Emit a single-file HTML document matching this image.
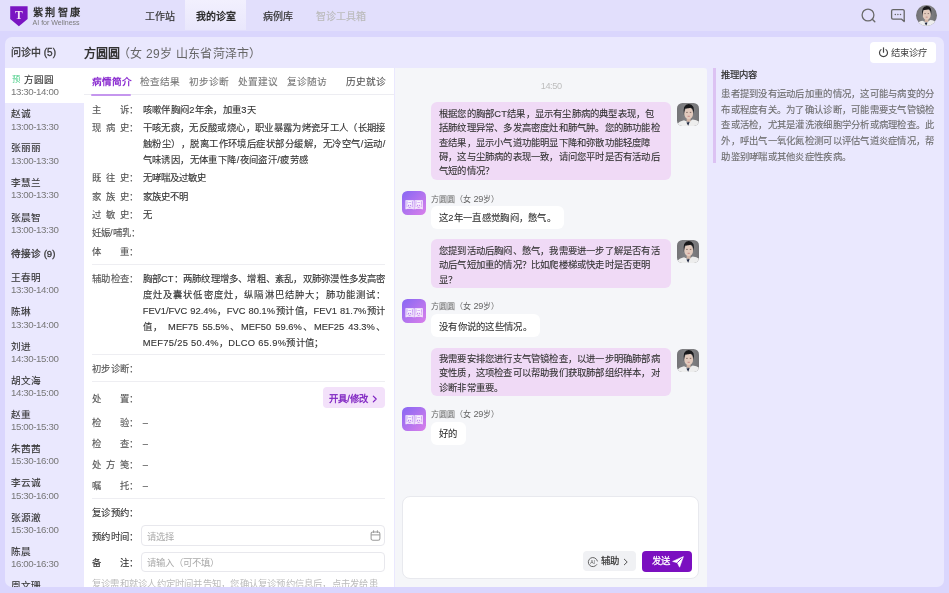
<!DOCTYPE html>
<html lang="zh-CN"><head><meta charset="utf-8">
<style>
*{box-sizing:border-box;margin:0;padding:0}
html,body{width:949px;height:593px;overflow:hidden}
body{text-spacing-trim:space-all;background:#DAD6FD;font-family:"Liberation Sans",sans-serif;color:#333;position:relative}
.a{position:absolute;white-space:nowrap}
#nav{position:absolute;left:0;top:0;width:949px;height:31.3px;background:#E2DFFC}
#act{position:absolute;left:184.7px;top:0;width:61px;height:30.4px;background:linear-gradient(#F2F0FE,#E9E7FC)}
.nv{font-size:10px;line-height:14px;top:9.7px;color:#333;-webkit-text-stroke:0.18px #333}
#panel{position:absolute;left:5px;top:37px;width:938.5px;height:550.3px;background:#EAE8FE;border-radius:7px;overflow:hidden}
#clip{position:absolute;left:0;top:0;width:949px;height:587.3px;overflow:hidden}
#root{position:absolute;left:0;top:0;width:949px;height:593px;will-change:transform;background:#DAD6FD}
.nm{font-size:9.6px;line-height:14px;color:#333;-webkit-text-stroke:0.12px #333}
.tm{font-size:9.7px;line-height:12px;color:#777;letter-spacing:-0.38px}
#detail{position:absolute;left:84px;top:68.2px;width:309.9px;height:530px;background:#fff}
#chat{position:absolute;left:394.5px;top:68.2px;width:312.8px;height:530px;background:#F5F6F9;border-top-right-radius:3px}
.tab{font-size:9.67px;line-height:14px;top:75.1px;color:#777;-webkit-text-stroke:0.1px #777}
.lb{font-size:9.33px;line-height:16px;color:#555;left:92px;white-space:nowrap;-webkit-text-stroke:0.12px #555}
.j{display:inline-block;width:37.33px;text-align:justify;text-align-last:justify;vertical-align:top}
.vl{font-size:9.33px;line-height:16px;color:#333;left:142.7px;width:242.7px;-webkit-text-stroke:0.12px #333}
.jl{text-align:justify;text-align-last:justify}
.sep{position:absolute;left:91.7px;width:293.8px;height:1px;background:#EEEEF2}
.bub{position:absolute;white-space:nowrap;background:#F0DAF6;border-radius:6px;font-size:9.33px;line-height:14.4px;letter-spacing:0.2px;color:#333;padding:4.3px 8px 2.6px 8px;width:240px;-webkit-text-stroke:0.1px #333}
.pb{position:absolute;background:#fff;border-radius:6px;font-size:9.33px;line-height:14.5px;letter-spacing:0.3px;color:#333;padding:5.6px 8px 3px 8px;white-space:nowrap;-webkit-text-stroke:0.1px #333}
.dav{position:absolute;left:677px;width:22.4px;height:23.3px;border-radius:5.5px;overflow:hidden;background:linear-gradient(90deg,#747477,#858588 50%,#747477)}
.pav{position:absolute;left:402.3px;width:23.8px;height:23.7px;border-radius:5.5px;background:linear-gradient(135deg,#8767F4,#DA7FEA);color:rgba(255,255,255,0.85);font-size:9.8px;line-height:23.7px;text-align:center;-webkit-text-stroke:0.3px rgba(255,255,255,0.85);letter-spacing:0px;padding-top:1.6px;text-indent:0px;font-size:9.4px}
.plb{font-size:8px;line-height:12px;color:#666;left:431.3px;margin-top:1.5px}
.inp{position:absolute;left:141px;width:244.4px;border:1px solid #E8E8ED;border-radius:4px;background:#fff}
.ph{font-size:9.33px;line-height:14px;color:#AAA}
</style></head><body><div id="root">
<div id="nav"></div>
<div id="act"></div>
<!-- logo -->
<svg class="a" style="left:10px;top:5.5px" width="18" height="21" viewBox="0 0 18 21">
<path d="M0.2 0.2H17.6V13L8.9 20.2L0.2 13Z" fill="#7A14C2"/>
<text x="8.9" y="12.8" text-anchor="middle" font-family="Liberation Serif" font-size="11.5" font-weight="bold" fill="#F2DDF5">T</text>
</svg>
<div class="a" style="left:33px;top:6px;font-size:10.2px;line-height:13px;letter-spacing:2.3px;font-weight:bold;color:#333">紫荆智康</div>
<div class="a" style="left:32.6px;top:18.6px;font-size:7.1px;line-height:8px;color:#7c7c7c;letter-spacing:-0.04px">AI for Wellness</div>
<div class="a nv" style="left:145px">工作站</div>
<div class="a nv" style="left:196px;font-weight:bold;color:#2a2a2a;-webkit-text-stroke:0px">我的诊室</div>
<div class="a nv" style="left:262.5px">病例库</div>
<div class="a nv" style="left:316px;color:#BBB;-webkit-text-stroke:0.15px #BBB">智诊工具箱</div>
<!-- right icons -->
<svg class="a" style="left:860px;top:7px" width="18" height="18" viewBox="0 0 18 18">
<circle cx="8" cy="8" r="5.9" fill="none" stroke="#6a6a6a" stroke-width="1.3"/>
<path d="M12.3 12.3L14.8 14.8" stroke="#6a6a6a" stroke-width="1.4" stroke-linecap="round"/>
</svg>
<svg class="a" style="left:889px;top:7px" width="18" height="18" viewBox="0 0 18 18">
<path d="M4 2.6H13.8A1.4 1.4 0 0 1 15.2 4V14.6L12.6 12.2H4A1.4 1.4 0 0 1 2.6 10.8V4A1.4 1.4 0 0 1 4 2.6Z" fill="none" stroke="#666" stroke-width="1.3" stroke-linejoin="round"/>
<circle cx="6.3" cy="7.4" r="0.75" fill="#666"/><circle cx="8.9" cy="7.4" r="0.75" fill="#666"/><circle cx="11.5" cy="7.4" r="0.75" fill="#666"/>
</svg>
<div class="a" style="left:916.2px;top:5.2px;width:20.8px;height:20.8px;border-radius:50%;overflow:hidden;background:linear-gradient(90deg,#707073,#88888b 50%,#707073)">
<svg width="21" height="21" viewBox="0 0 23 23"><path d="M0 23 L0.3 21.5 Q1.8 18.2 7 17.2 L11.3 19.2 L15.6 16.4 Q20.6 16.8 22.6 19.5 L23 23Z" fill="#EDEDED"/><path d="M9.4 19.4 L11.2 22.8 L12.6 19.1Z" fill="#1f2740"/><rect x="9.7" y="14.2" width="3.8" height="4.4" fill="#D2B4A4"/><ellipse cx="11.7" cy="10.3" rx="4.4" ry="5.9" fill="#E2CABD"/><path d="M6.9 12.2 Q5.4 1.1 11.8 1.1 Q18.1 1.1 16.7 11.8 Q16.4 5.6 14 4.7 Q11 5.7 8 5.5 Q7.3 8.2 6.9 12.2Z" fill="#18181a"/><path d="M9.2 9.4h1.5M12.8 9.4h1.5" stroke="#6a5650" stroke-width="0.8"/><path d="M10.6 13.3h2.2" stroke="#c07a78" stroke-width="0.8"/></svg>
</div>

<div id="panel"></div>
<div id="clip">
<!-- header -->
<div class="a" style="left:11px;top:46.1px;font-size:10px;line-height:14px;color:#383838;-webkit-text-stroke:0.3px #383838">问诊中 (5)</div>
<div class="a" style="left:84px;top:45.8px;font-size:12px;line-height:16px;color:#333;font-weight:bold">方圆圆</div>
<div class="a" style="left:118px;top:45.8px;font-size:12px;line-height:16px;letter-spacing:0.25px;color:#666">（女 29岁 山东省菏泽市）</div>
<div class="a" style="left:869.8px;top:42.2px;width:66.2px;height:21.1px;background:#fff;border-radius:4px"></div>
<svg class="a" style="left:877.5px;top:46.8px" width="11" height="11" viewBox="0 0 11 11">
<path d="M3 2.6A4 4 0 1 0 8 2.6" fill="none" stroke="#444" stroke-width="1.2" stroke-linecap="round"/>
<path d="M5.5 0.8V5.2" stroke="#444" stroke-width="1.2" stroke-linecap="round"/>
</svg>
<div class="a" style="left:891px;top:45.8px;font-size:9.33px;line-height:14px;color:#444">结束诊疗</div>

<!-- sidebar -->
<div class="a" style="left:5px;top:68.2px;width:80px;height:34.4px;background:#fff"></div>
<div class="a" style="left:12px;top:73.5px;font-size:8.3px;line-height:11px;color:#4DCF8A">预</div>
<div class="a nm" style="left:24.2px;top:72.9px">方圆圆</div>
<div class="a tm" style="left:10.9px;top:86.3px">13:30-14:00</div>
<div class="a nm" style="left:10.9px;top:107.3px">赵诚</div>
<div class="a tm" style="left:10.9px;top:120.8px">13:00-13:30</div>
<div class="a nm" style="left:10.9px;top:141.3px">张丽丽</div>
<div class="a tm" style="left:10.9px;top:154.8px">13:00-13:30</div>
<div class="a nm" style="left:10.9px;top:175.7px">李慧兰</div>
<div class="a tm" style="left:10.9px;top:189.1px">13:00-13:30</div>
<div class="a nm" style="left:10.9px;top:210.5px">张晨智</div>
<div class="a tm" style="left:10.9px;top:224.0px">13:00-13:30</div>
<div class="a nm" style="left:11px;top:247.2px;color:#383838;-webkit-text-stroke:0.3px #383838">待接诊 (9)</div>
<div class="a nm" style="left:10.9px;top:270.9px">王春明</div>
<div class="a tm" style="left:10.9px;top:284.3px">13:30-14:00</div>
<div class="a nm" style="left:10.9px;top:305.2px">陈琳</div>
<div class="a tm" style="left:10.9px;top:318.6px">13:30-14:00</div>
<div class="a nm" style="left:10.9px;top:339.5px">刘进</div>
<div class="a tm" style="left:10.9px;top:352.9px">14:30-15:00</div>
<div class="a nm" style="left:10.9px;top:373.5px">胡文海</div>
<div class="a tm" style="left:10.9px;top:386.9px">14:30-15:00</div>
<div class="a nm" style="left:10.9px;top:407.5px">赵重</div>
<div class="a tm" style="left:10.9px;top:421.1px">15:00-15:30</div>
<div class="a nm" style="left:10.9px;top:441.9px">朱茜茜</div>
<div class="a tm" style="left:10.9px;top:455.1px">15:30-16:00</div>
<div class="a nm" style="left:10.9px;top:476.3px">李云诚</div>
<div class="a tm" style="left:10.9px;top:489.7px">15:30-16:00</div>
<div class="a nm" style="left:10.9px;top:510.6px">张源澈</div>
<div class="a tm" style="left:10.9px;top:524.0px">15:30-16:00</div>
<div class="a nm" style="left:10.9px;top:544.8px">陈晨</div>
<div class="a tm" style="left:10.9px;top:558.2px">16:00-16:30</div>
<div class="a nm" style="left:10.9px;top:579.1px">周文珊</div>

<!-- detail panel -->
<div id="detail"></div>
<div class="a tab" style="left:91.8px;color:#8A2BD0;font-weight:bold;-webkit-text-stroke:0px">病情简介</div>
<div class="a tab" style="left:140.3px">检查结果</div>
<div class="a tab" style="left:189.2px">初步诊断</div>
<div class="a tab" style="left:238px">处置建议</div>
<div class="a tab" style="left:287.4px">复诊随访</div>
<div class="a tab" style="left:345.9px;color:#555;-webkit-text-stroke:0.1px #555">历史就诊</div>
<div class="a" style="left:84px;top:94px;width:309.9px;height:1.3px;background:#EDEDF2"></div>
<div class="a" style="left:91px;top:93.9px;width:40.2px;height:2px;background:#C596EE;border-radius:1px"></div>

<div class="a lb" style="top:101.9px"><span class="j">主诉</span>：</div>
<div class="a vl" style="top:101.9px;letter-spacing:0.3px">咳嗽伴胸闷2年余，加重3天</div>
<div class="a lb" style="top:119.9px"><span class="j">现病史</span>：</div>
<div class="a vl" style="top:119.9px"><div class="jl">干咳无痰，无反酸或烧心，职业暴露为烤瓷牙工人（长期接</div><div class="jl">触粉尘），脱离工作环境后症状部分缓解，无冷空气/运动/</div><div style="letter-spacing:0.4px">气味诱因，无体重下降/夜间盗汗/疲劳感</div></div>
<div class="a lb" style="top:170.4px"><span class="j">既往史</span>：</div>
<div class="a vl" style="top:170.4px">无哮喘及过敏史</div>
<div class="a lb" style="top:188.7px"><span class="j">家族史</span>：</div>
<div class="a vl" style="top:188.7px">家族史不明</div>
<div class="a lb" style="top:207.0px"><span class="j">过敏史</span>：</div>
<div class="a vl" style="top:207.0px">无</div>
<div class="a lb" style="top:225.3px">妊娠/哺乳：</div>
<div class="a lb" style="top:243.8px"><span class="j">体重</span>：</div>
<div class="sep" style="top:264.2px"></div>
<div class="a lb" style="top:270.9px"><span class="j">辅助检查</span>：</div>
<div class="a vl" style="top:270.9px"><div class="jl">胸部CT：两肺纹理增多、增粗、紊乱，双肺弥漫性多发高密</div><div class="jl">度灶及囊状低密度灶，纵隔淋巴结肿大；肺功能测试：</div><div class="jl">FEV1/FVC 92.4%，FVC 80.1%预计值，FEV1 81.7%预计</div><div class="jl">值， MEF75 55.5%、MEF50 59.6%、MEF25 43.3%、</div><div style="letter-spacing:0.3px">MEF75/25 50.4%，DLCO 65.9%预计值；</div></div>
<div class="sep" style="top:354.3px"></div>
<div class="a lb" style="top:361.0px"><span class="j">初步诊断</span>：</div>
<div class="sep" style="top:381.3px"></div>
<div class="a lb" style="top:390.7px"><span class="j">处置</span>：</div>
<div class="a" style="left:323.2px;top:387.1px;width:62.2px;height:21.4px;background:#F3E1FA;border-radius:4px"></div>
<div class="a" style="left:328.5px;top:391.5px;font-size:9.33px;line-height:14px;color:#7C1EC0;-webkit-text-stroke:0.3px #7C1EC0;letter-spacing:0.35px">开具/修改</div>
<svg class="a" style="left:372px;top:394.8px" width="6" height="8" viewBox="0 0 6 8"><path d="M1.3 1.2L4.2 4L1.3 6.8" fill="none" stroke="#7C1EC0" stroke-width="1.15" stroke-linecap="round" stroke-linejoin="round"/></svg>
<div class="a lb" style="top:414.7px"><span class="j">检验</span>：</div>
<div class="a vl" style="top:414.7px">–</div>
<div class="a lb" style="top:435.5px"><span class="j">检查</span>：</div>
<div class="a vl" style="top:435.5px">–</div>
<div class="a lb" style="top:457.0px"><span class="j">处方笺</span>：</div>
<div class="a vl" style="top:457.0px">–</div>
<div class="a lb" style="top:477.8px"><span class="j">嘱托</span>：</div>
<div class="a vl" style="top:477.8px">–</div>
<div class="sep" style="top:497.6px"></div>
<div class="a lb" style="top:504.6px;color:#333;-webkit-text-stroke:0.12px #333"><span class="j">复诊预约</span>：</div>
<div class="inp" style="top:525.4px;height:20.6px"></div>
<div class="a lb" style="top:529.0px;color:#333;-webkit-text-stroke:0.12px #333"><span class="j">预约时间</span>：</div>
<div class="a ph" style="left:146.7px;top:530.0px">请选择</div>
<svg class="a" style="left:369.5px;top:530.3px" width="11" height="11" viewBox="0 0 11 11"><rect x="1.1" y="1.9" width="8.8" height="8.3" rx="1.8" fill="none" stroke="#9a9a9a" stroke-width="1.05"/><path d="M1.1 4.9H9.9" stroke="#9a9a9a" stroke-width="1"/><path d="M3.6 0.7V2.6M7.4 0.7V2.6" stroke="#9a9a9a" stroke-width="1" stroke-linecap="round"/></svg>
<div class="inp" style="top:552px;height:20.4px"></div>
<div class="a lb" style="top:555.2px;color:#333;-webkit-text-stroke:0.12px #333"><span class="j">备注</span>：</div>
<div class="a ph" style="left:146.7px;top:556.2px">请输入（可不填）</div>
<div class="a" style="left:92px;top:576.2px;font-size:9.33px;line-height:16px;letter-spacing:0.22px;color:#BBB">复诊需和就诊人约定时间并告知，您确认复诊预约信息后，点击发给患</div>

<!-- chat -->
<div id="chat"></div>
<div class="a" style="left:540.8px;top:80.2px;font-size:9.2px;line-height:12px;letter-spacing:-0.45px;color:#BDBDBD">14:50</div>

<div class="bub" style="left:431.1px;top:102.4px;height:77.9px">根据您的胸部CT结果，显示有尘肺病的典型表现，包<br>括肺纹理异常、多发高密度灶和肺气肿。您的肺功能检<br>查结果，显示小气道功能明显下降和弥散功能轻度障<br>碍，这与尘肺病的表现一致，请问您平时是否有活动后<br>气短的情况？</div>
<div class="dav" style="top:102.9px"><svg width="23" height="24" viewBox="0 0 23 24"><path d="M0 24 L0.3 21.5 Q1.8 18.2 7 17.2 L11.3 19.2 L15.6 16.4 Q20.6 16.8 22.6 19.5 L23 24Z" fill="#EDEDED"/><path d="M9.4 19.4 L11.2 22.8 L12.6 19.1Z" fill="#1f2740"/><rect x="9.7" y="14.2" width="3.8" height="4.4" fill="#D2B4A4"/><ellipse cx="11.7" cy="10.3" rx="4.4" ry="5.9" fill="#E2CABD"/><path d="M6.9 12.2 Q5.4 1.1 11.8 1.1 Q18.1 1.1 16.7 11.8 Q16.4 5.6 14 4.7 Q11 5.7 8 5.5 Q7.3 8.2 6.9 12.2Z" fill="#18181a"/><path d="M9.2 9.4h1.5M12.8 9.4h1.5" stroke="#6a5650" stroke-width="0.8"/><path d="M10.6 13.3h2.2" stroke="#c07a78" stroke-width="0.8"/></svg></div>
<div class="pav" style="top:191px">圆圆</div>
<div class="a plb" style="top:191px">方圆圆（女 <span style="font-size:9.2px;letter-spacing:-0.3px">29</span>岁）</div>
<div class="pb" style="left:431px;top:205.6px;height:23.4px">这2年一直感觉胸闷，憋气。</div>

<div class="bub" style="left:431.1px;top:239.4px;height:48.9px">您提到活动后胸闷、憋气，我需要进一步了解是否有活<br>动后气短加重的情况？比如爬楼梯或快走时是否更明<br>显？</div>
<div class="dav" style="top:240.2px"><svg width="23" height="24" viewBox="0 0 23 24"><path d="M0 24 L0.3 21.5 Q1.8 18.2 7 17.2 L11.3 19.2 L15.6 16.4 Q20.6 16.8 22.6 19.5 L23 24Z" fill="#EDEDED"/><path d="M9.4 19.4 L11.2 22.8 L12.6 19.1Z" fill="#1f2740"/><rect x="9.7" y="14.2" width="3.8" height="4.4" fill="#D2B4A4"/><ellipse cx="11.7" cy="10.3" rx="4.4" ry="5.9" fill="#E2CABD"/><path d="M6.9 12.2 Q5.4 1.1 11.8 1.1 Q18.1 1.1 16.7 11.8 Q16.4 5.6 14 4.7 Q11 5.7 8 5.5 Q7.3 8.2 6.9 12.2Z" fill="#18181a"/><path d="M9.2 9.4h1.5M12.8 9.4h1.5" stroke="#6a5650" stroke-width="0.8"/><path d="M10.6 13.3h2.2" stroke="#c07a78" stroke-width="0.8"/></svg></div>
<div class="pav" style="top:299.1px">圆圆</div>
<div class="a plb" style="top:298.8px">方圆圆（女 <span style="font-size:9.2px;letter-spacing:-0.3px">29</span>岁）</div>
<div class="pb" style="left:431px;top:314.3px;height:23px">没有你说的这些情况。</div>

<div class="bub" style="left:431.1px;top:347.6px;height:48.6px">我需要安排您进行支气管镜检查，以进一步明确肺部病<br>变性质，这项检查可以帮助我们获取肺部组织样本，对<br>诊断非常重要。</div>
<div class="dav" style="top:348.6px"><svg width="23" height="24" viewBox="0 0 23 24"><path d="M0 24 L0.3 21.5 Q1.8 18.2 7 17.2 L11.3 19.2 L15.6 16.4 Q20.6 16.8 22.6 19.5 L23 24Z" fill="#EDEDED"/><path d="M9.4 19.4 L11.2 22.8 L12.6 19.1Z" fill="#1f2740"/><rect x="9.7" y="14.2" width="3.8" height="4.4" fill="#D2B4A4"/><ellipse cx="11.7" cy="10.3" rx="4.4" ry="5.9" fill="#E2CABD"/><path d="M6.9 12.2 Q5.4 1.1 11.8 1.1 Q18.1 1.1 16.7 11.8 Q16.4 5.6 14 4.7 Q11 5.7 8 5.5 Q7.3 8.2 6.9 12.2Z" fill="#18181a"/><path d="M9.2 9.4h1.5M12.8 9.4h1.5" stroke="#6a5650" stroke-width="0.8"/><path d="M10.6 13.3h2.2" stroke="#c07a78" stroke-width="0.8"/></svg></div>
<div class="pav" style="top:406.9px">圆圆</div>
<div class="a plb" style="top:406.9px">方圆圆（女 <span style="font-size:9.2px;letter-spacing:-0.3px">29</span>岁）</div>
<div class="pb" style="left:431.1px;top:421.8px;height:23.2px">好的</div>

<div class="a" style="left:401.9px;top:495.8px;width:297px;height:83.5px;background:#fff;border:1px solid #E8E9EE;border-radius:8px"></div>
<div class="a" style="left:583px;top:551px;width:53px;height:20.4px;background:#F0F1F4;border-radius:4px"></div>
<svg class="a" style="left:587px;top:555.5px" width="12" height="12" viewBox="0 0 12 12">
<path d="M9.8 8.6A4.6 4.6 0 1 1 10.4 5" fill="none" stroke="#555" stroke-width="0.9" stroke-linecap="round"/>
<text x="5.6" y="7.9" text-anchor="middle" font-family="Liberation Sans" font-size="5" fill="#555">AI</text>
</svg>
<div class="a" style="left:601px;top:554.2px;font-size:9.33px;line-height:14px;color:#333;-webkit-text-stroke:0.2px #333">辅助</div>
<svg class="a" style="left:622.5px;top:557.5px" width="6" height="8" viewBox="0 0 6 8"><path d="M1.3 1.2L4.2 4L1.3 6.8" fill="none" stroke="#555" stroke-width="1" stroke-linecap="round" stroke-linejoin="round"/></svg>
<div class="a" style="left:642px;top:550.8px;width:50px;height:20.8px;background:#7B0FC0;border-radius:4px"></div>
<div class="a" style="left:652px;top:554.2px;font-size:9.33px;line-height:14px;color:#fff;-webkit-text-stroke:0.25px #fff">发送</div>
<svg class="a" style="left:671.8px;top:556px" width="12" height="12" viewBox="0 0 12 12"><path d="M0.6 5.4L11.4 0.6L7.6 11.2L5.3 6.7Z" fill="#fff" stroke="#fff" stroke-width="0.6" stroke-linejoin="round"/><path d="M5.3 6.7L9.6 2.4" stroke="#7B0FC0" stroke-width="0.9"/></svg>

<!-- reasoning -->
<div class="a" style="left:713px;top:68.3px;width:2.6px;height:94.7px;background:#DCC2F3"></div>
<div class="a" style="left:721.3px;top:67.6px;font-size:9.33px;line-height:14px;color:#2e2e2e;-webkit-text-stroke:0.2px #2e2e2e">推理内容</div>
<div class="a" style="left:721.3px;top:86.9px;width:225px;font-size:9.33px;line-height:15.75px;letter-spacing:0.27px;color:#6c6c6c;-webkit-text-stroke:0.1px #6c6c6c;white-space:normal">患者提到没有运动后加重的情况，这可能与病变的分<br>布或程度有关。为了确认诊断，可能需要支气管镜检<br>查或活检，尤其是灌洗液细胞学分析或病理检查。此<br>外，呼出气一氧化氮检测可以评估气道炎症情况，帮<br>助鉴别哮喘或其他炎症性疾病。</div>
</div>
</div></body></html>
